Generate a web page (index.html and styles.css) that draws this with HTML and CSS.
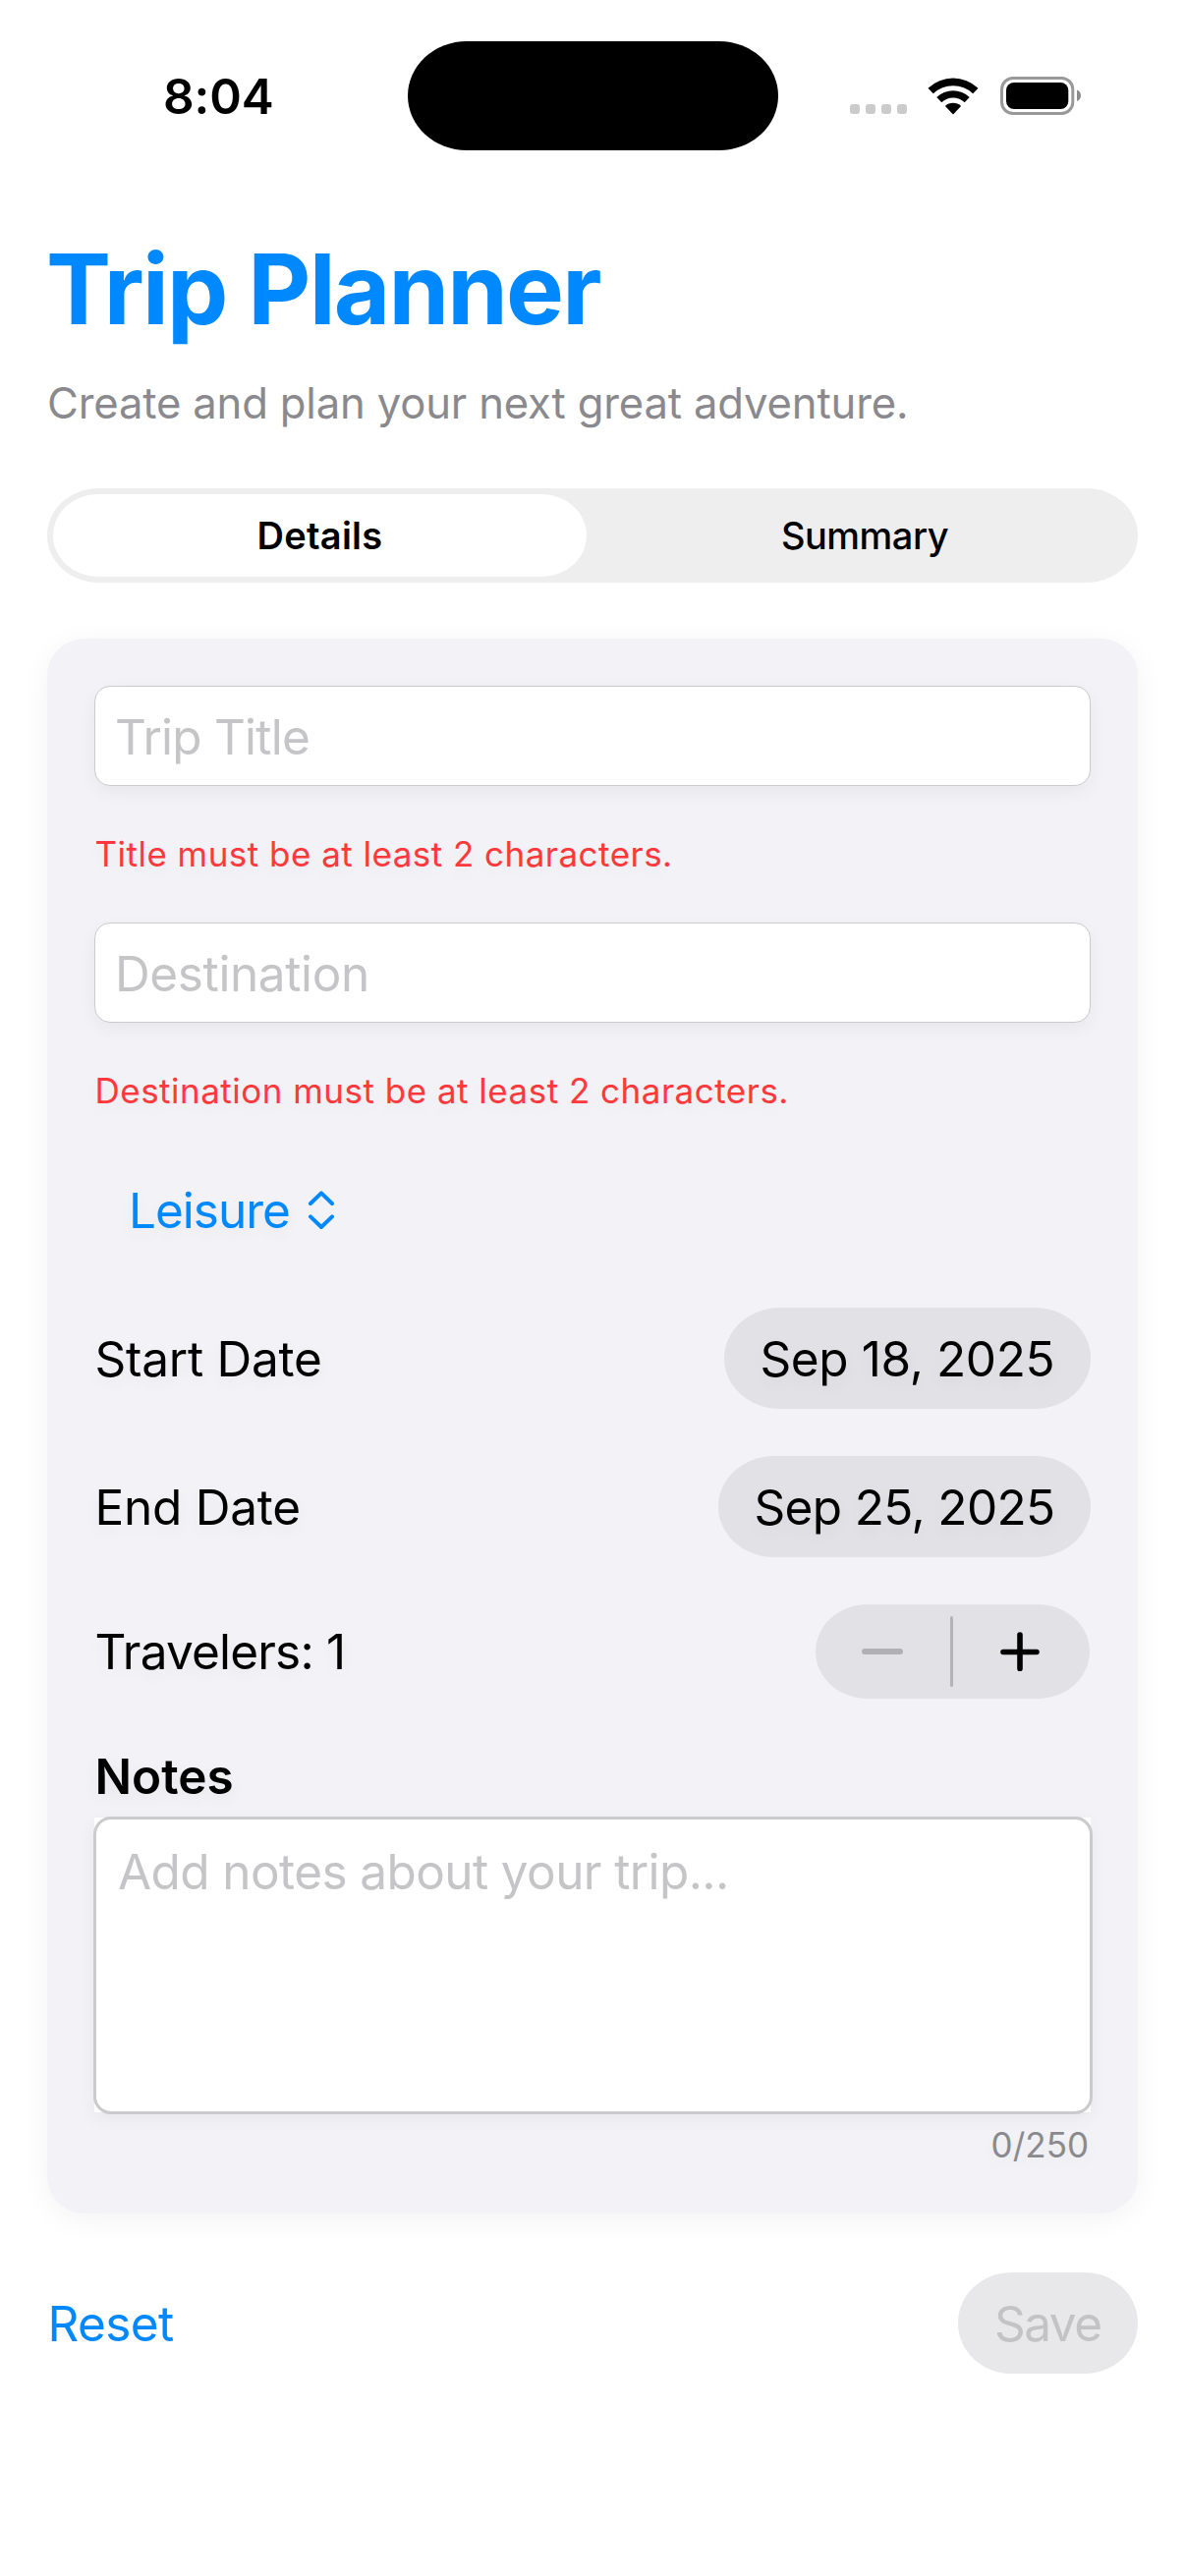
FILE: index.html
```html
<!DOCTYPE html>
<html lang="en">
<head>
<meta charset="utf-8">
<title>Trip Planner</title>
<link rel="stylesheet" href="styles.css">
</head>
<body>
<div class="screen">
  <header class="status-bar">
    <span class="time">8:04</span>
    <div class="island"></div>
    <div class="status-icons">
      <svg class="dots" width="58" height="10" viewBox="0 0 58 10" fill="#cbcbcb">
        <rect x="0" width="10" height="10" rx="3"/><rect x="16" width="10" height="10" rx="3"/><rect x="32" width="10" height="10" rx="3"/><rect x="48" width="10" height="10" rx="3"/>
      </svg>
      <svg class="wifi" width="52" height="38" viewBox="0 0 52 38">
        <path d="M0.5 10.7A37 37 0 0 1 51.5 10.7L46.2 16.3A29.3 29.3 0 0 0 5.8 16.3Z"/>
        <path d="M9.3 19.9A24.3 24.3 0 0 1 42.7 19.9L37.7 25.2A17 17 0 0 0 14.3 25.2Z"/>
        <path d="M17.9 29A11.7 11.7 0 0 1 34.1 29L26 37.5Z"/>
      </svg>
      <svg class="battery" width="82" height="39" viewBox="0 0 82 39">
        <rect x="1.5" y="1.5" width="72.3" height="36" rx="11.5" fill="none" stroke="#999" stroke-width="3"/>
        <rect x="6" y="6" width="63.3" height="27" rx="8"/>
        <path d="M78 13.5C80.6 14.6 82 16.8 82 19.3C82 21.8 80.6 24 78 25.1Z" fill="#8a8a8a"/>
      </svg>
    </div>
  </header>

  <main class="content">
    <h1 class="title">Trip Planner</h1>
    <p class="subtitle">Create and plan your next great adventure.</p>

    <nav class="segmented">
      <span class="segment active">Details</span>
      <span class="segment other">Summary</span>
    </nav>

    <section class="card">
      <div class="field"><span class="ph-title">Trip Title</span></div>
      <p class="error err-title">Title must be at least 2 characters.</p>
      <div class="field"><span class="ph-dest">Destination</span></div>
      <p class="error err-dest">Destination must be at least 2 characters.</p>
      <div class="picker">
        <span class="picker-label">Leisure</span>
        <svg width="28" height="40" viewBox="0 0 28 40" fill="none" stroke="#0088ff" stroke-width="4" stroke-linecap="round" stroke-linejoin="round"><path d="M3 13L14 2.4L25 13M3 26.4L14 37L25 26.4"/></svg>
      </div>
      <div class="row">
        <span class="label start">Start Date</span>
        <span class="date d18">Sep 18, 2025</span>
      </div>
      <div class="row">
        <span class="label end">End Date</span>
        <span class="date d25">Sep 25, 2025</span>
      </div>
      <div class="row">
        <span class="label travelers">Travelers: 1</span>
        <div class="stepper">
          <div class="step"><svg width="42" height="6" viewBox="0 0 42 6"><rect width="42" height="6" rx="3" fill="#b0b0b5"/></svg></div>
          <div class="divider"></div>
          <div class="step plus"><svg width="40" height="40" viewBox="0 0 40 40" stroke="#000" stroke-width="5.6" stroke-linecap="round"><path d="M3 20.5H37M20 3V37.5"/></svg></div>
        </div>
      </div>
      <div class="notes">
        <h2 class="notes-title">Notes</h2>
        <div class="textarea"><span class="ph-notes">Add notes about your trip...</span></div>
        <span class="counter">0/250</span>
      </div>
    </section>

    <footer class="actions">
      <span class="reset">Reset</span>
      <span class="save">Save</span>
    </footer>
  </main>
</div>
</body>
</html>
```
FILE: styles.css
```css
* { box-sizing: border-box; margin: 0; padding: 0; }

body {
  background: #fff;
  color: #000;
  font: 400 49.5px/60px Inter, "Liberation Sans", sans-serif;
  white-space: nowrap;
}

svg { display: block; }

.screen { width: 1206px; height: 2622px; overflow: hidden; }

/* Status bar */
.status-bar { display: flex; height: 234px; padding: 41.5px 105.5px 0 166px; }
.time { width: 248.5px; height: 111px; line-height: 113px; font-weight: 600; letter-spacing: -0.1px; }
.island { width: 377px; height: 111px; border-radius: 60px / 55.5px; background: #000; }
.status-icons { display: flex; align-items: flex-end; height: 75.5px; margin-left: 73.5px; }
.dots { margin-bottom: 1px; }
.wifi { margin-left: 21px; }
.battery { margin-left: 22px; }

/* Page header */
.content { padding: 0 48px; }
.title {
  height: 122px;
  margin-left: -1px;
  font-size: 99px;
  font-weight: 700;
  line-height: 121px;
  letter-spacing: -1.78px;
  color: #0088ff;
}
.subtitle {
  height: 54px;
  margin-top: 27px;
  font-size: 43.6px;
  line-height: 55px;
  letter-spacing: -0.16px;
  color: #8a8a8e;
}

/* Segmented control */
.segmented {
  display: flex;
  height: 96px;
  margin-top: 60px;
  padding: 6px;
  border-radius: 52px / 48px;
  background: #eee;
  font-size: 38px;
  font-weight: 500;
  line-height: 84px;
  text-align: center;
}
.segment { flex: 1; }
.active {
  flex: 0 0 543px;
  border-radius: 46px / 42px;
  background: #fff;
  font-weight: 600;
  letter-spacing: 0.25px;
}
.other { padding-left: 11px; letter-spacing: -0.5px; }

/* Form card */
.card {
  display: flex;
  flex-direction: column;
  gap: 48px;
  height: 1603px;
  margin-top: 57px;
  padding: 48px 48px 0;
  border-radius: 38px;
  background: #f2f2f7;
  box-shadow: 0 6px 30px rgba(0, 0, 0, .05);
  text-shadow: 0 6px 18px rgba(0, 0, 0, .06);
}
.field {
  height: 102px;
  padding-left: 20px;
  border: 1px solid #cbcbcd;
  border-radius: 16px;
  background: #fff;
  box-shadow: 0 6px 18px rgba(0, 0, 0, .05);
  line-height: 102px;
  color: #c5c5c7;
  text-shadow: none;
}
.ph-title { letter-spacing: -0.77px; }
.ph-dest { letter-spacing: -0.38px; }
.error { height: 43px; padding-left: 0.5px; font-size: 35px; line-height: 43px; color: #ff383c; }
.err-title { letter-spacing: 0.47px; }
.err-dest { letter-spacing: 0.49px; }
.picker { display: flex; align-items: center; gap: 18px; height: 103px; padding-left: 35px; color: #0088ff; }
.picker-label { letter-spacing: -1.01px; }

.row { display: flex; align-items: center; justify-content: space-between; }
.label { padding-left: 0.5px; }
.start { letter-spacing: -0.25px; }
.end { letter-spacing: -0.25px; }
.travelers { letter-spacing: -0.81px; }
.date {
  height: 103px;
  border-radius: 57px / 51.5px;
  padding-left: 36.5px;
  background: #e1e1e6;
  line-height: 104px;
}
.d18 { width: 373px; letter-spacing: -0.39px; }
.d25 { width: 379px; letter-spacing: -0.64px; }

.stepper { display: flex; align-items: center; width: 279px; height: 96px; margin-right: 1px; border-radius: 53px / 48px; background: #e1e1e6; }
.step { display: flex; flex: 1; justify-content: center; }
.plus { padding-right: 3px; }
.divider { width: 3px; height: 72px; background: #b3b3b8; border-radius: 2px; }

.notes { display: flex; flex-direction: column; }
.notes-title { height: 61px; padding-left: 0.5px; font-size: 49.5px; font-weight: 600; line-height: 62px; }
.textarea {
  position: relative;
  height: 300px;
  margin-top: 12px;
  padding: 25px 0 0 24px;
  background: #fff;
  box-shadow: 0 6px 18px rgba(0, 0, 0, .05);
  color: #c5c5c7;
  text-shadow: none;
}
/* The rounded outline sits slightly outside the square text area */
.textarea::after {
  content: "";
  position: absolute;
  inset: -1.5px;
  border: 3px solid #cbcbcd;
  border-radius: 18px;
}
.ph-notes { letter-spacing: -0.6px; }
.counter { margin: 12px 2px 0 0; font-size: 35px; line-height: 43px; text-align: right; color: #8a8a8e; }

/* Bottom actions */
.actions { display: flex; align-items: center; justify-content: space-between; height: 103px; margin-top: 60px; }
.reset { padding-left: 0.5px; letter-spacing: -0.6px; color: #0088ff; }
.save {
  width: 183px;
  height: 103px;
  padding-left: 37px;
  border-radius: 54px / 51.5px;
  background: #e8e8ea;
  line-height: 104px;
  letter-spacing: -1.5px;
  color: #c3c3c5;
}
```
